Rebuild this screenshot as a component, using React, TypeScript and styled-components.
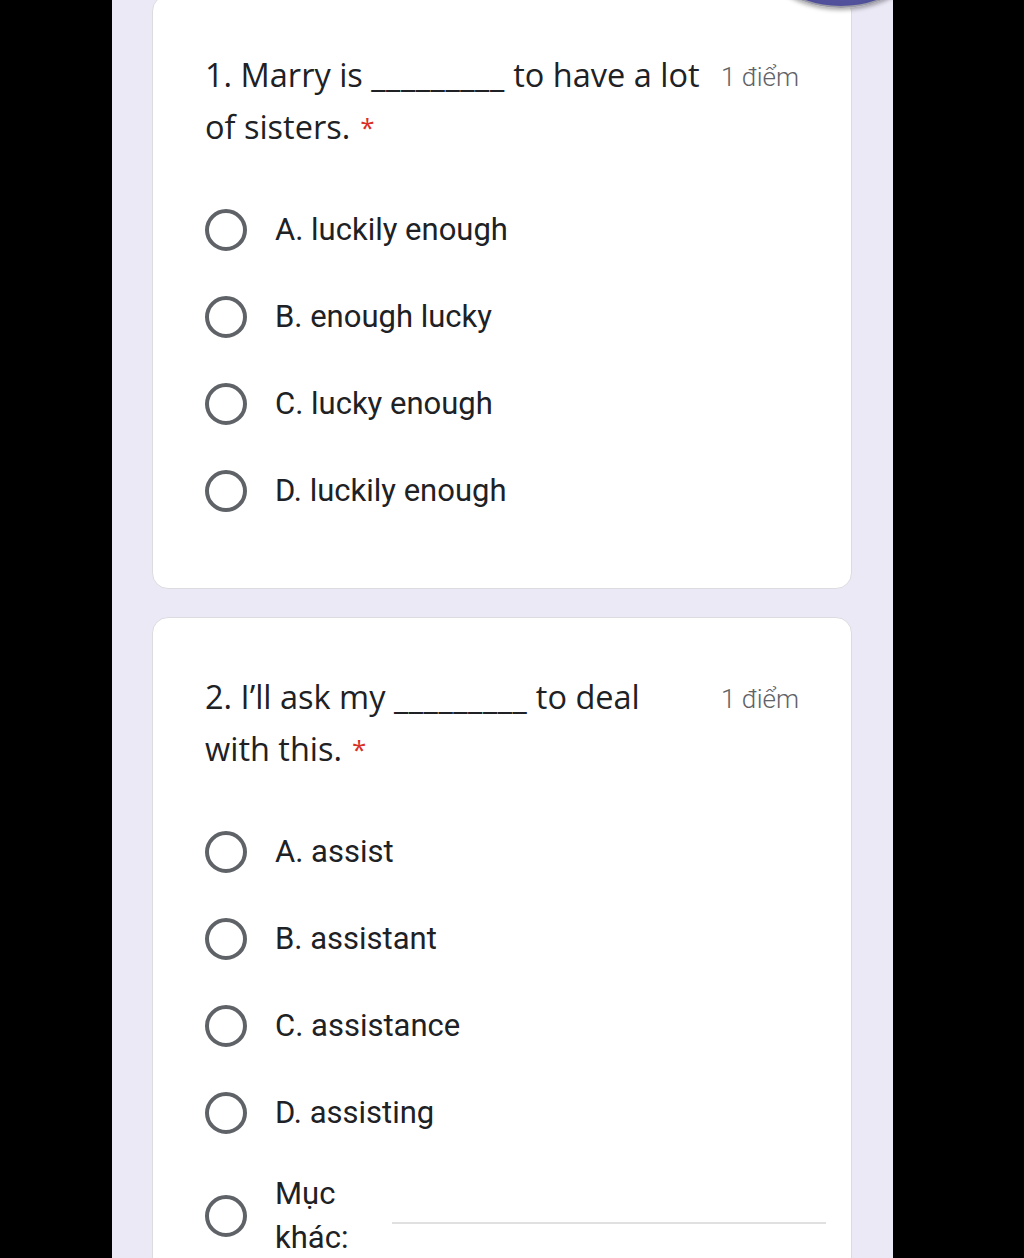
import React from "react";
import styled, { createGlobalStyle } from "styled-components";

const GlobalStyle = createGlobalStyle`
  html, body {
    margin: 0;
    padding: 0;
    background: #000;
  }
  body {
    font-family: Roboto, "Liberation Sans", sans-serif;
    overflow: hidden;
  }
`;

const Screen = styled.div`
  position: relative;
  width: 1024px;
  height: 1258px;
  overflow: hidden;
  background: #000;
`;

const Column = styled.div`
  width: 781px;
  height: 100%;
  margin-left: 112px;
  background: #ece9f7;
  display: flex;
  flex-direction: column;
  gap: 28px;
  padding: 0 41px 0 40px;
  box-sizing: border-box;
`;

const Card = styled.div<{ $first?: boolean }>`
  background: #fff;
  border: 1px solid #dadce0;
  border-radius: 16px;
  padding: 53px 52px 54px;
  margin-top: ${(p) => (p.$first ? "-5px" : "0")};
  flex-shrink: 0;
`;

const Header = styled.div`
  display: flex;
  align-items: flex-start;
  justify-content: space-between;
  margin-bottom: 33px;
`;

const Title = styled.div`
  font-family: "Open Sans", "Liberation Sans", sans-serif;
  font-size: 32.5px;
  line-height: 52px;
  color: #202124;
  min-width: 0;
`;

const TitleLine = styled.div`
  white-space: nowrap;
`;

const Blank = styled.span`
  letter-spacing: 0.6px;
`;

const Required = styled.span`
  color: #d93025;
  font-size: 26px;
  margin-left: 10px;
  vertical-align: 2px;
`;

const Points = styled.div`
  font-family: Roboto, sans-serif;
  font-size: 26px;
  font-weight: 300;
  line-height: 52px;
  color: #5f6368;
  white-space: nowrap;
  flex-shrink: 0;
  margin-left: 14px;
  padding-top: 2px;
`;

const Options = styled.div`
  display: flex;
  flex-direction: column;
`;

const Option = styled.label`
  display: flex;
  align-items: center;
  height: 87px;
`;

const Radio = styled.span`
  width: 42px;
  height: 42px;
  border-radius: 50%;
  border: 4px solid #5f6368;
  box-sizing: border-box;
  flex-shrink: 0;
  margin-right: 28px;
`;

const OptionText = styled.span`
  font-family: Roboto, sans-serif;
  font-size: 31px;
  line-height: 44px;
  color: #202124;
`;

const OtherRow = styled.div`
  display: flex;
  align-items: center;
  padding-top: 16px;
`;

const OtherLabel = styled(OptionText)`
  width: 117px;
  flex-shrink: 0;
`;

const OtherInput = styled.div`
  width: 434px;
  flex-shrink: 0;
  height: 2px;
  background: #e0e0e0;
  margin-top: 14px;
`;

const Badge = styled.div`
  position: absolute;
  left: 731px;
  top: -212px;
  width: 220px;
  height: 220px;
  border-radius: 50%;
  background: radial-gradient(circle at 50% 80%, #5b5aa6 0%, #3e3d86 60%, #2f2e6e 100%);
  box-shadow: 0 2px 4px rgba(0, 0, 0, 0.35);
  border: 2px solid #9a9aa6;
  box-sizing: border-box;
`;

const questions = [
  {
    start: "1. Marry is ",
    end: " to have a lot",
    second: "of sisters.",
    options: ["A. luckily enough", "B. enough lucky", "C. lucky enough", "D. luckily enough"],
    other: false,
  },
  {
    start: "2. I’ll ask my ",
    end: " to deal",
    second: "with this.",
    options: ["A. assist", "B. assistant", "C. assistance", "D. assisting"],
    other: true,
  },
];

export default function App() {
  return (
    <Screen>
      <GlobalStyle />
      <Column>
        {questions.map((q, i) => (
          <Card key={i} $first={i === 0}>
            <Header>
              <Title>
                <TitleLine>
                  {q.start}
                  <Blank>_________</Blank>
                  {q.end}
                </TitleLine>
                <TitleLine>
                  {q.second}
                  <Required>*</Required>
                </TitleLine>
              </Title>
              <Points>1 điểm</Points>
            </Header>
            <Options>
              {q.options.map((o, j) => (
                <Option key={j}>
                  <Radio />
                  <OptionText>{o}</OptionText>
                </Option>
              ))}
              {q.other && (
                <OtherRow>
                  <Radio />
                  <OtherLabel>Mục khác:</OtherLabel>
                  <OtherInput />
                </OtherRow>
              )}
            </Options>
          </Card>
        ))}
      </Column>
      <Badge />
    </Screen>
  );
}
